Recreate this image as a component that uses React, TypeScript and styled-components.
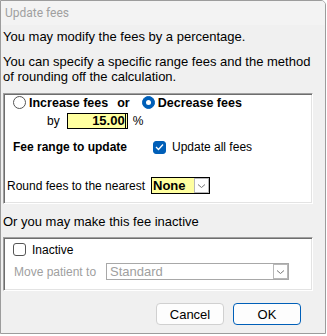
import React from 'react';
import styled, { createGlobalStyle } from 'styled-components';

const GlobalStyle = createGlobalStyle`
  html, body {
    margin: 0;
    padding: 0;
    background: #ffffff;
  }
  body {
    font-family: 'Liberation Sans', Arial, sans-serif;
    font-size: 13px;
    color: #000;
  }
`;

const Window = styled.div`
  box-sizing: border-box;
  width: 326px;
  height: 334px;
  border: 1px solid #9c9c9c;
  border-top-right-radius: 5px;
  background: #f0f0f0;
  display: flex;
  flex-direction: column;
  overflow: hidden;
`;

const TitleBar = styled.div`
  height: 24px;
  line-height: 24px;
  padding-left: 4px;
  background: #f3f3f3;
  color: #a0a0a0;
  font-family: Roboto, 'Noto Sans', sans-serif;
  font-size: 12px;
`;

const Content = styled.div`
  padding: 0 2px;
  display: flex;
  flex-direction: column;
`;

const Para = styled.p<{ $top: number }>`
  margin: ${(p) => p.$top}px 0 0 0;
  line-height: 15px;
`;

const Panel = styled.div<{ $top: number; $pt: number; $pb: number }>`
  box-sizing: border-box;
  width: 310px;
  margin-top: ${(p) => p.$top}px;
  padding: ${(p) => p.$pt}px 0 ${(p) => p.$pb}px 0;
  background: #fff;
  border: 1px solid;
  border-color: #a0a0a0 #ffffff #ffffff #a0a0a0;
  box-shadow: inset 1px 1px 0 #6e6e6e, inset -1px -1px 0 #e3e3e3;
  display: flex;
  flex-direction: column;
  font-size: 12px;
`;

const Row = styled.div<{ $top?: number; $left?: number; $h?: number }>`
  display: flex;
  align-items: center;
  height: ${(p) => p.$h ?? 16}px;
  margin-top: ${(p) => p.$top ?? 0}px;
  padding-left: ${(p) => p.$left ?? 0}px;
`;

const Label = styled.span<{ $bold?: boolean; $muted?: boolean; $ml?: number; $w?: number; $size?: number }>`
  font-weight: ${(p) => (p.$bold ? 'bold' : 'normal')};
  color: ${(p) => (p.$muted ? '#a0a0a0' : '#000')};
  margin-left: ${(p) => p.$ml ?? 0}px;
  ${(p) => (p.$w ? `width: ${p.$w}px;` : '')}
  ${(p) => (p.$size ? `font-size: ${p.$size}px;` : '')}
  white-space: nowrap;
`;

const Radio = styled.span<{ $checked?: boolean; $ml?: number }>`
  box-sizing: border-box;
  width: 13px;
  height: 13px;
  border-radius: 50%;
  margin-left: ${(p) => p.$ml ?? 0}px;
  flex: none;
  border: 1px solid ${(p) => (p.$checked ? '#005fb8' : '#555')};
  background: ${(p) => (p.$checked ? '#005fb8' : '#fff')};
  display: flex;
  align-items: center;
  justify-content: center;

  &::after {
    content: '';
    display: ${(p) => (p.$checked ? 'block' : 'none')};
    width: 5px;
    height: 5px;
    border-radius: 50%;
    background: #fff;
  }
`;

const Check = styled.span<{ $checked?: boolean; $ml?: number }>`
  box-sizing: border-box;
  width: 13px;
  height: 13px;
  border-radius: 3px;
  margin-left: ${(p) => p.$ml ?? 0}px;
  flex: none;
  border: 1px solid ${(p) => (p.$checked ? '#005fb8' : '#555')};
  background: ${(p) => (p.$checked ? '#005fb8' : '#fff')};
  display: flex;
  align-items: center;
  justify-content: center;
`;

const NumberBox = styled.div`
  box-sizing: border-box;
  width: 61px;
  height: 16px;
  margin-left: 7px;
  border: 1px solid #000;
  background: #ffffa0;
  font-weight: bold;
  font-size: 13px;
  line-height: 14px;
  text-align: right;
  padding-right: 1px;

  span {
    border-right: 1px solid #000;
  }
`;

const Combo = styled.div<{ $w: number; $ml: number; $yellow?: boolean; $disabled?: boolean }>`
  box-sizing: border-box;
  width: ${(p) => p.$w}px;
  height: 17px;
  margin-left: ${(p) => p.$ml}px;
  border: 1px solid ${(p) => (p.$disabled ? '#a8a8a8' : '#000')};
  background: ${(p) => (p.$yellow ? '#ffffa0' : '#fff')};
  display: flex;
  align-items: center;
  justify-content: space-between;
  padding-left: ${(p) => (p.$disabled ? 3 : 1)}px;

  .value {
    font-weight: ${(p) => (p.$disabled ? 'normal' : 'bold')};
    color: ${(p) => (p.$disabled ? '#a0a0a0' : '#000')};
    line-height: 15px;
    font-size: 13px;
  }
`;

const DropButton = styled.span`
  box-sizing: border-box;
  width: 15px;
  height: 15px;
  border: 1px solid #b8b8b8;
  background: #fff;
  display: flex;
  align-items: center;
  justify-content: center;
`;

const Footer = styled.div`
  display: flex;
  justify-content: flex-end;
  gap: 9px;
  margin-top: 12px;
  padding-right: 22px;
`;

const Button = styled.button<{ $primary?: boolean }>`
  box-sizing: border-box;
  width: 68px;
  height: 22px;
  padding: 0;
  border-radius: 4px;
  border: 1px solid ${(p) => (p.$primary ? '#005fb8' : '#d0d0d0')};
  background: #fdfdfd;
  font-family: 'Liberation Sans', Arial, sans-serif;
  font-size: 13px;
  color: #000;
`;

const Chevron = () => (
  <svg width="9" height="6" viewBox="0 0 9 6">
    <path d="M1 1.5 L4.5 4.5 L8 1.5" fill="none" stroke="#777" strokeWidth="1" />
  </svg>
);

const Tick = () => (
  <svg width="9" height="8" viewBox="0 0 9 8">
    <path d="M1 4 L3.5 6.5 L8 1.5" fill="none" stroke="#fff" strokeWidth="1.3" />
  </svg>
);

const App: React.FC = () => {
  return (
    <>
      <GlobalStyle />
      <Window>
        <TitleBar>Update fees</TitleBar>
        <Content>
          <Para $top={4}>You may modify the fees by a percentage.</Para>
          <Para $top={10}>
            You can specify a specific range fees and the method
            <br />
            of rounding off the calculation.
          </Para>

          <Panel $top={9} $pt={1} $pb={9}>
            <Row $h={15} $left={9}>
              <Radio />
              <Label $bold $ml={3} $size={12.5}>Increase fees</Label>
              <Label $bold $ml={9} $size={12.5}>or</Label>
              <Radio $checked $ml={12} />
              <Label $bold $ml={3} $size={12.5}>Decrease fees</Label>
            </Row>
            <Row $top={3} $left={43}>
              <Label>by</Label>
              <NumberBox>
                <span>15.00</span>
              </NumberBox>
              <Label $ml={5}>%</Label>
            </Row>
            <Row $top={10} $left={9}>
              <Label $bold $w={140}>Fee range to update</Label>
              <Check $checked>
                <Tick />
              </Check>
              <Label $ml={6}>Update all fees</Label>
            </Row>
            <Row $top={22} $left={3} $h={17}>
              <Label $w={144}>Round fees to the nearest</Label>
              <Combo $w={59} $ml={0} $yellow>
                <span className="value">None</span>
                <DropButton>
                  <Chevron />
                </DropButton>
              </Combo>
            </Row>
          </Panel>

          <Para $top={10}>Or you may make this fee inactive</Para>

          <Panel $top={8} $pt={4} $pb={10}>
            <Row $h={15} $left={9}>
              <Check />
              <Label $ml={6}>Inactive</Label>
            </Row>
            <Row $top={6} $left={10} $h={17}>
              <Label $muted $w={92}>Move patient to</Label>
              <Combo $w={183} $ml={0} $disabled>
                <span className="value">Standard</span>
                <DropButton>
                  <Chevron />
                </DropButton>
              </Combo>
            </Row>
          </Panel>

          <Footer>
            <Button>Cancel</Button>
            <Button $primary>OK</Button>
          </Footer>
        </Content>
      </Window>
    </>
  );
};

export default App;
